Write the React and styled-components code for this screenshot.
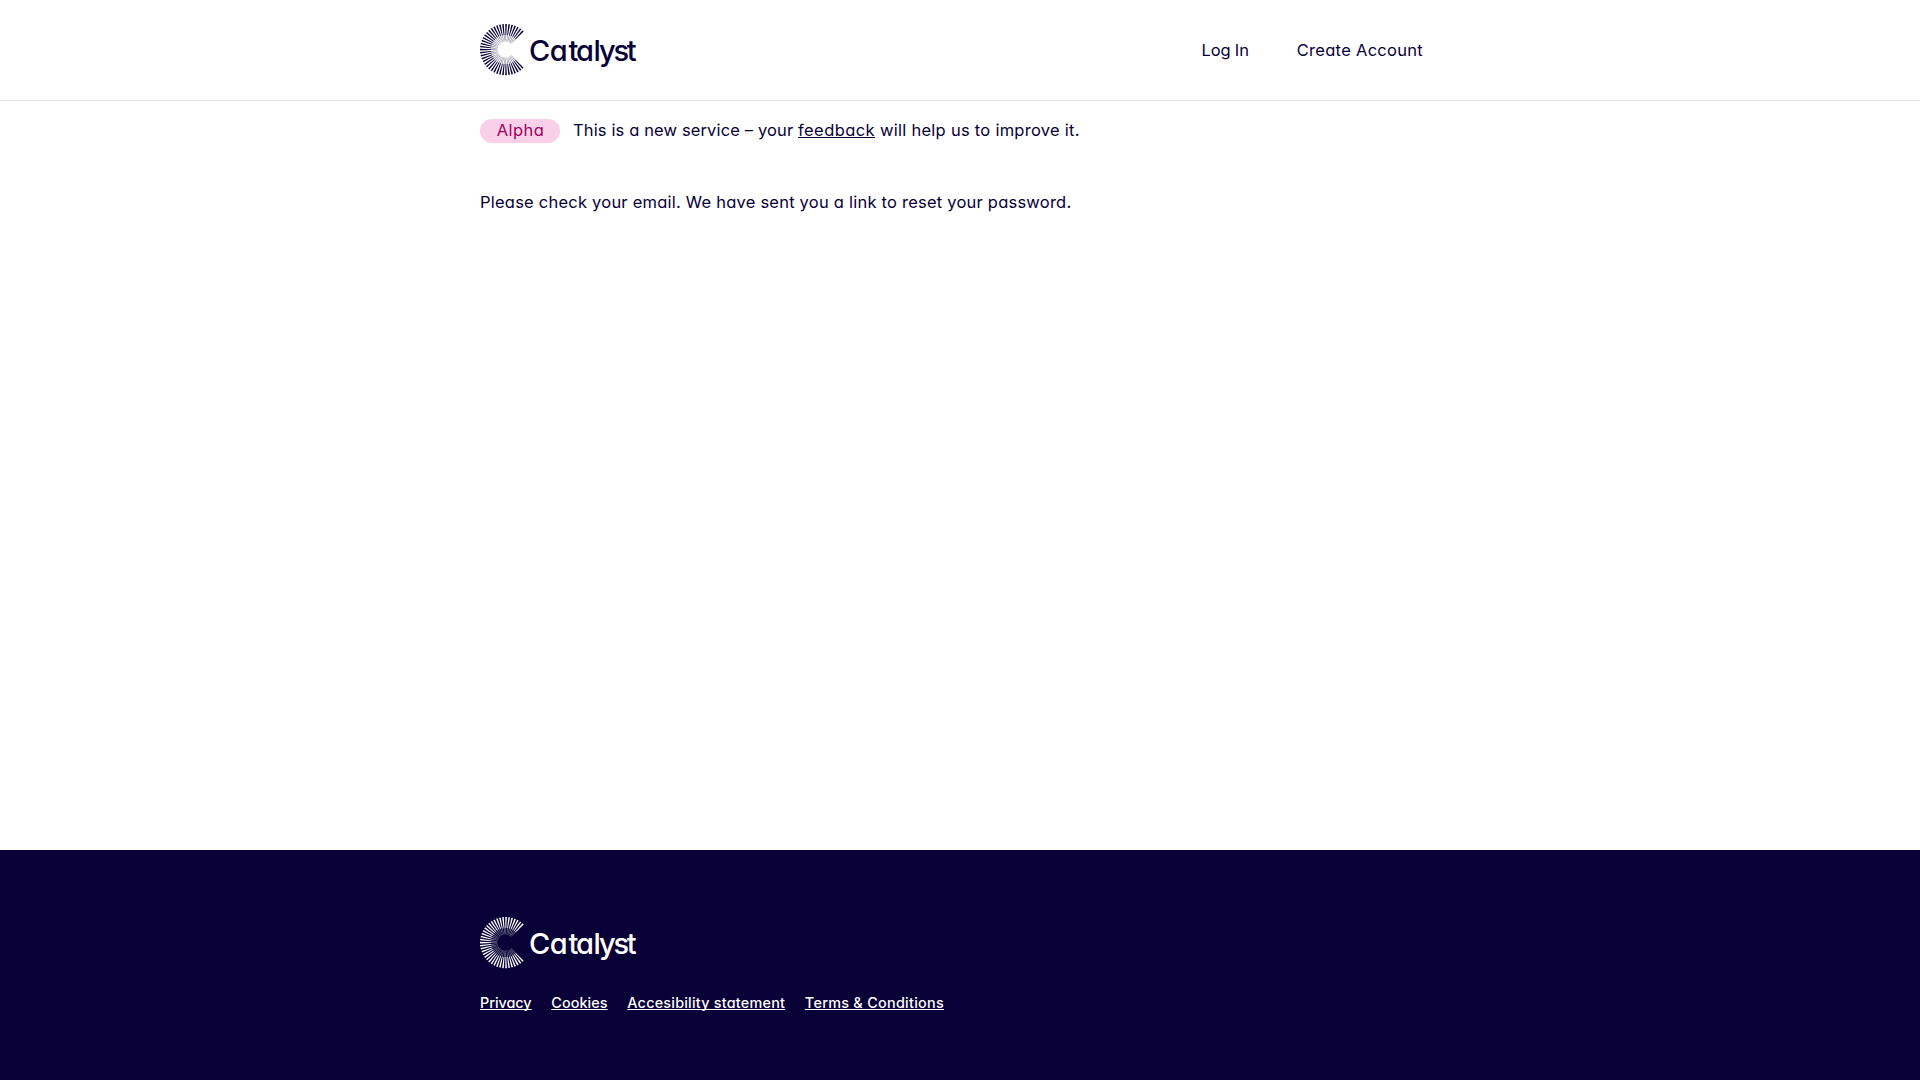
import React from "react";
import styled, { createGlobalStyle } from "styled-components";

const navy = "#080036";

const GlobalStyle = createGlobalStyle`
  *, *::before, *::after { box-sizing: border-box; }
  body {
    margin: 0;
    background: #fff;
    color: ${navy};
    font-family: Inter, "Open Sans", sans-serif;
    font-feature-settings: "cv11";
    font-size: 16.5px;
    line-height: 24px;
  }
`;

const Page = styled.div`
  display: flex;
  flex-direction: column;
  min-height: 100vh;
`;

const Container = styled.div`
  width: 960px;
  margin: 0 auto;
`;

const Header = styled.header`
  height: 101px;
  border-bottom: 1px solid #e4e3ea;
`;

const HeaderRow = styled(Container)`
  display: flex;
  align-items: center;
  justify-content: space-between;
  height: 100px;
  padding-right: 17px;
`;

const Nav = styled.nav`
  display: flex;
  gap: 48px;
`;

const NavLink = styled.a`
  color: inherit;
  text-decoration: none;
  letter-spacing: ${(p) => p.$track}px;
`;

const Banner = styled(Container)`
  display: flex;
  align-items: flex-start;
  height: 43px;
  padding-top: 17px;
`;

const Tag = styled.strong`
  width: 80px;
  height: 24px;
  margin: 1px 13px 0 0;
  padding-left: 1px;
  border-radius: 12px;
  background: #fad0e8;
  color: #a0005f;
  font-weight: 400;
  line-height: 22px;
  letter-spacing: 0.4px;
  text-align: center;
`;

const Run = styled.span`
  white-space: pre;
  letter-spacing: ${(p) => p.$track}px;
`;

const TextLink = styled.a`
  color: inherit;
  letter-spacing: ${(p) => p.$track}px;
  text-decoration: underline;
  text-decoration-thickness: 1px;
  text-decoration-skip-ink: none;
  text-underline-offset: 1px;
`;

const Main = styled.main`
  flex: 1;
  padding-top: 46px;
`;

const Message = styled.p`
  margin: 0;
  letter-spacing: 0.226px;
`;

const Footer = styled.footer`
  height: 230px;
  padding-top: 67px;
  background: ${navy};
  color: #fff;
`;

const FooterLinks = styled.nav`
  display: flex;
  gap: 19.7px;
  margin-top: 22px;
  font-size: 14.4px;
  font-weight: 500;
`;

const LogoSvg = styled.svg`
  display: block;
  fill: currentColor;
`;

const Wordmark = styled.text`
  font-family: Inter, sans-serif;
  font-size: 29px;
  font-weight: 450;
`;

const RAYS = 39;
const rays = Array.from({ length: RAYS }, (_, i) => 47 + (i * 266) / (RAYS - 1));

function Logo() {
  return (
    <LogoSvg width="158" height="52" viewBox="0 0 158 52" role="img" aria-label="Catalyst">
      {rays.map((angle) => (
        <g key={angle} transform={`translate(25.6 25.6) rotate(${angle})`}>
          <polygon points="25.6,-0.8 14.5,-0.42 14.5,0.42 25.6,0.8" />
          <polygon points="14.5,-0.3 8,-0.14 8,0.14 14.5,0.3" opacity="0.6" />
        </g>
      ))}
      <Wordmark x="49 69.8 88.5 96.1 113.5 119 133.6 146.8" y="36.6">
        Catalyst
      </Wordmark>
    </LogoSvg>
  );
}

export default function App() {
  return (
    <Page>
      <GlobalStyle />
      <Header>
        <HeaderRow>
          <Logo />
          <Nav>
            <NavLink $track={-0.14}>Log In</NavLink>
            <NavLink $track={0.285}>Create Account</NavLink>
          </Nav>
        </HeaderRow>
      </Header>
      <Banner>
        <Tag>Alpha</Tag>
        <Run $track={0.133}>{"This is a new service – your "}</Run>
        <TextLink href="#" $track={0.421}>feedback</TextLink>
        <Run $track={0.269}>{" will help us to improve it."}</Run>
      </Banner>
      <Main>
        <Container>
          <Message>Please check your email. We have sent you a link to reset your password.</Message>
        </Container>
      </Main>
      <Footer>
        <Container>
          <Logo />
          <FooterLinks>
            <TextLink href="#" $track={-0.03}>Privacy</TextLink>
            <TextLink href="#" $track={0.07}>Cookies</TextLink>
            <TextLink href="#" $track={0.22}>Accesibility statement</TextLink>
            <TextLink href="#" $track={0.28}>Terms &amp; Conditions</TextLink>
          </FooterLinks>
        </Container>
      </Footer>
    </Page>
  );
}
